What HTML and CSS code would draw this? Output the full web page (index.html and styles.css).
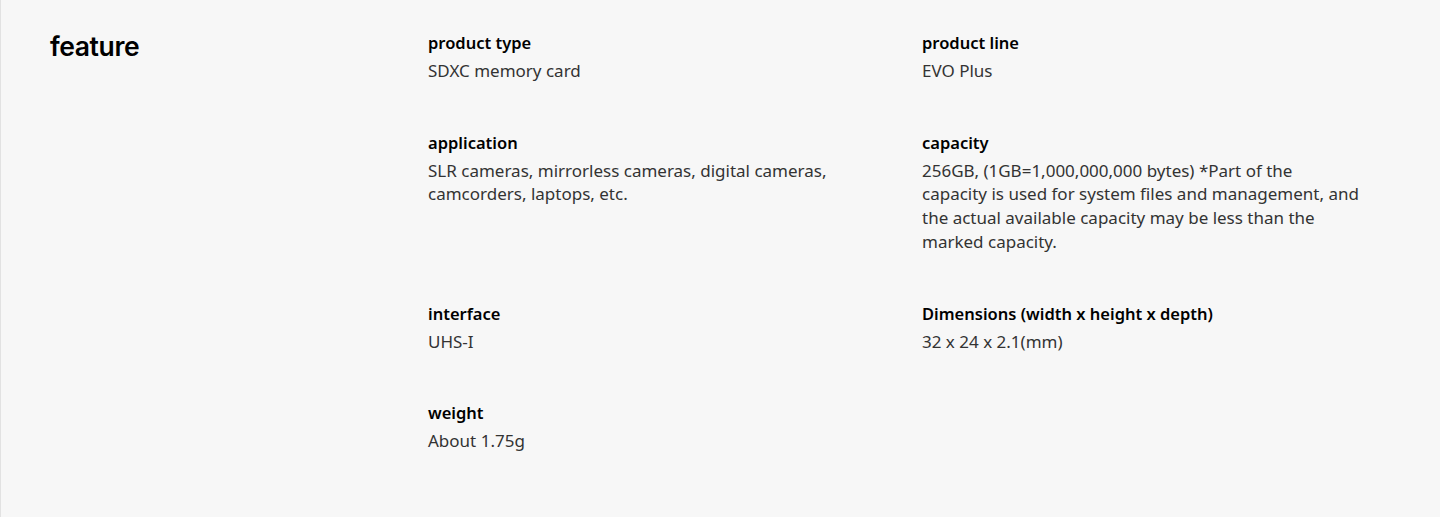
FILE: index.html
```html
<!DOCTYPE html>
<html lang="en">
<head>
<meta charset="utf-8">
<title>feature</title>
<link rel="stylesheet" href="styles.css">
</head>
<body>
<section class="spec-section">
  <h2 class="spec-heading">feature</h2>
  <dl class="spec-list">
    <div class="spec-item">
      <dt class="spec-title">product type</dt>
      <dd class="spec-value">SDXC memory card</dd>
    </div>
    <div class="spec-item">
      <dt class="spec-title">product line</dt>
      <dd class="spec-value">EVO Plus</dd>
    </div>
    <div class="spec-item">
      <dt class="spec-title">application</dt>
      <dd class="spec-value">SLR cameras, mirrorless cameras, digital cameras, camcorders, laptops, etc.</dd>
    </div>
    <div class="spec-item">
      <dt class="spec-title">capacity</dt>
      <dd class="spec-value">256GB, (1GB=1,000,000,000 bytes) *Part of the capacity is used for system files and management, and the actual available capacity may be less than the marked capacity.</dd>
    </div>
    <div class="spec-item">
      <dt class="spec-title">interface</dt>
      <dd class="spec-value">UHS-I</dd>
    </div>
    <div class="spec-item">
      <dt class="spec-title">Dimensions (width x height x depth)</dt>
      <dd class="spec-value">32 x 24 x 2.1(mm)</dd>
    </div>
    <div class="spec-item">
      <dt class="spec-title">weight</dt>
      <dd class="spec-value">About 1.75g</dd>
    </div>
  </dl>
</section>
</body>
</html>
```

FILE: styles.css
```css
html, body {
  margin: 0;
  padding: 0;
  background: #f7f7f7;
}
body {
  min-height: 517px;
  border-left: 1px solid #e2e2e2;
  box-sizing: border-box;
  font-family: "Noto Sans", "Open Sans", sans-serif;
  color: #000;
}
.spec-section {
  display: grid;
  grid-template-columns: 378px 988px;
  padding: 31px 0 40px 49px;
}
.spec-heading {
  margin: 0;
  font-family: Inter, "Noto Sans", sans-serif;
  font-weight: 600;
  font-size: 26.5px;
  line-height: 30px;
  letter-spacing: -0.4px;
  color: #000;
}
.spec-list {
  margin: 0;
  display: grid;
  grid-template-columns: 494px 494px;
  row-gap: 48px;
}
.spec-item {
  padding-right: 56px;
}
.spec-title {
  font-size: 16.5px;
  font-weight: 600;
  line-height: 24px;
  margin-bottom: 4px;
  color: #000;
}
.spec-value {
  margin: 0;
  font-size: 17px;
  line-height: 23.7px;
  color: #333;
}
```
